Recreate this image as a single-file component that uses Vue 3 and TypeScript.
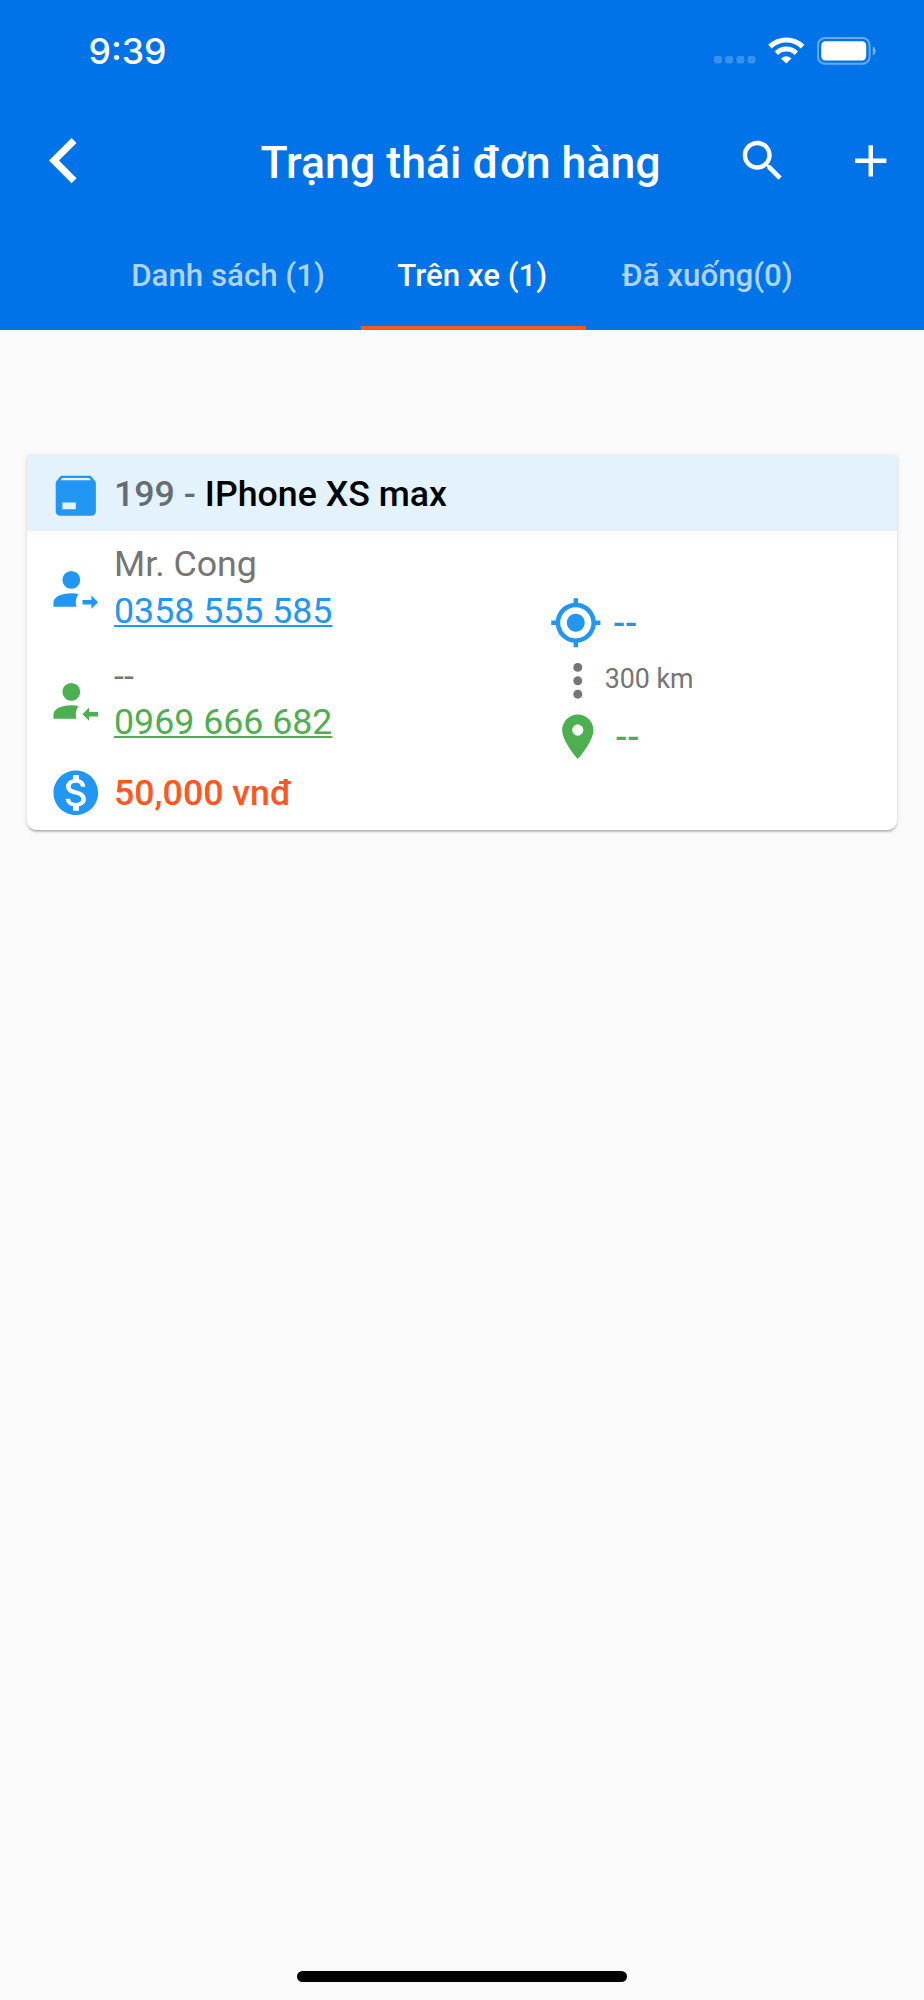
<script setup lang="ts">
interface Tab {
  label: string
  active: boolean
}

interface Contact {
  kind: 'sender' | 'receiver'
  name: string
  phone: string
  arrow: string
}

const tabs: Tab[] = [
  { label: 'Danh sách (1)', active: false },
  { label: 'Trên xe (1)', active: true },
  { label: 'Đã xuống(0)', active: false },
]

const contacts: Contact[] = [
  { kind: 'sender', name: 'Mr. Cong', phone: '0358 555 585', arrow: 'M19 21V19H15V17H19V15L22 18L19 21Z' },
  { kind: 'receiver', name: '--', phone: '0969 666 682', arrow: 'M18 15V17H22V19H18V21L15 18L18 15Z' },
]
</script>

<template>
  <div class="screen">
    <header class="top">
      <div class="status">
        <span class="time">9:39</span>
        <div class="indicators">
          <svg class="signal" viewBox="0 0 42 8" fill="#fff" fill-opacity=".22">
            <rect x="0" y="0" width="8" height="7.4" rx="2.4" />
            <rect x="11.2" y="0" width="8" height="7.4" rx="2.4" />
            <rect x="22.4" y="0" width="8" height="7.4" rx="2.4" />
            <rect x="33.6" y="0" width="8" height="7.4" rx="2.4" />
          </svg>
          <svg class="wifi" viewBox="0 0 37 27" fill="none" stroke="#fff">
            <path d="M2 9.600Q9 3 18.300 3T34.600 9.600" stroke-width="5.200" />
            <path d="M8.300 16.200Q12.500 12.100 18.300 12.100T28.300 16.200" stroke-width="5" />
            <path d="M13 21.400Q18.300 17 23.500 21.400L18.300 26.500Z" fill="#fff" stroke="none" />
          </svg>
          <svg class="battery" viewBox="0 0 60 28">
            <rect x="1" y="1" width="51.600" height="25.800" rx="7" fill="none" stroke="#fff" stroke-opacity=".4" stroke-width="2" />
            <rect x="4.200" y="4.200" width="45" height="19.300" rx="4.200" fill="#fff" />
            <path d="M55.800 9.500C59.600 11 59.600 16.800 55.800 18.400Z" fill="#fff" fill-opacity=".45" />
          </svg>
        </div>
      </div>

      <div class="appbar">
        <svg class="back" viewBox="0 0 29 46" fill="#fff">
          <path d="M22.600 0L27.600 5L10 22.600L27.600 40.200L22.600 45.200L0 22.600Z" />
        </svg>
        <h1 class="title">Trạng thái đơn hàng</h1>
        <div class="actions">
          <svg class="icon" viewBox="0 0 24 24" fill="#fff">
            <path d="M15.500 14h-.79l-.28-.27C15.410 12.590 16 11.110 16 9.500 16 5.910 13.090 3 9.500 3S3 5.910 3 9.500 5.910 16 9.500 16c1.610 0 3.090-.59 4.230-1.570l.27.28v.79l5 4.990L20.490 19l-4.990-5zm-6 0C7.010 14 5 11.990 5 9.500S7.010 5 9.500 5 14 7.010 14 9.500 11.990 14 9.500 14z" />
          </svg>
          <svg class="icon" viewBox="0 0 24 24" fill="#fff">
            <path d="M19 13h-6v6h-2v-6H5v-2h6V5h2v6h6v2z" />
          </svg>
        </div>
      </div>

      <nav class="tabs">
        <div v-for="tab in tabs" :key="tab.label" class="tab" :class="{ active: tab.active }">{{ tab.label }}</div>
      </nav>
    </header>

    <main class="content">
      <article class="card">
        <div class="card-head">
          <svg class="icon blue" viewBox="0 0 24 24" fill="currentColor">
            <path d="M5.120,5H18.870L17.930,4H5.930L5.120,5M20.540,5.230C20.830,5.570 21,6 21,6.500V19A2,2 0 0,1 19,21H5A2,2 0 0,1 3,19V6.500C3,6 3.170,5.570 3.460,5.230L4.840,3.550C5.120,3.210 5.530,3 6,3H18C18.470,3 18.880,3.210 19.150,3.550L20.540,5.230M6,18H12V15H6V18Z" />
          </svg>
          <div class="order"><span class="number">199 - </span>IPhone XS max</div>
        </div>

        <div class="card-body">
          <div class="people">
            <div v-for="c in contacts" :key="c.kind" class="contact" :class="c.kind">
              <svg class="icon" viewBox="0 0 24 24" fill="currentColor">
                <path :d="c.arrow" />
                <path d="M10 4A4 4 0 0 1 14 8A4 4 0 0 1 10 12A4 4 0 0 1 6 8A4 4 0 0 1 10 4M10 14C11.150 14 12.250 14.120 13.240 14.340C12.460 15.350 12 16.620 12 18C12 18.700 12.120 19.370 12.340 20H2V18C2 15.790 5.580 14 10 14Z" />
              </svg>
              <div>
                <div class="name">{{ c.name }}</div>
                <div class="phone">{{ c.phone }}</div>
              </div>
            </div>
            <div class="price">
              <svg class="icon blue" viewBox="0 0 24 24" fill="currentColor">
                <path d="M12 2C6.480 2 2 6.480 2 12s4.480 10 10 10 10-4.480 10-10S17.520 2 12 2zm1.410 16.090V20h-2.670v-1.930c-1.710-.36-3.160-1.460-3.270-3.400h1.960c.1 1.050.82 1.870 2.650 1.870 1.960 0 2.400-.98 2.400-1.590 0-.83-.44-1.610-2.670-2.140-2.480-.6-4.180-1.620-4.180-3.670 0-1.720 1.390-2.840 3.110-3.210V4h2.670v1.950c1.860.45 2.790 1.860 2.850 3.390H14.300c-.05-1.110-.64-1.870-2.220-1.870-1.500 0-2.400.68-2.400 1.640 0 .84.65 1.390 2.670 1.910s4.180 1.390 4.180 3.910c-.01 1.830-1.380 2.830-3.120 3.160z" />
              </svg>
              <span>50,000 vnđ</span>
            </div>
          </div>

          <div class="route">
            <div class="stop blue">
              <svg class="icon" viewBox="0 0 24 24" fill="currentColor">
                <path d="M12 8c-2.210 0-4 1.790-4 4s1.790 4 4 4 4-1.790 4-4-1.790-4-4-4zm8.940 3c-.46-4.170-3.770-7.480-7.940-7.940V1h-2v2.060C6.830 3.520 3.520 6.830 3.060 11H1v2h2.060c.46 4.170 3.770 7.480 7.940 7.940V23h2v-2.060c4.170-.46 7.480-3.770 7.940-7.940H23v-2h-2.060zM12 19c-3.870 0-7-3.130-7-7s3.130-7 7-7 7 3.130 7 7-3.130 7-7 7z" />
              </svg>
              <span>--</span>
            </div>
            <div class="distance">
              <svg class="icon" viewBox="0 0 24 24" fill="currentColor">
                <circle cx="12" cy="6" r="2" />
                <circle cx="12" cy="12" r="2" />
                <circle cx="12" cy="18" r="2" />
              </svg>
              <span>300 km</span>
            </div>
            <div class="stop end">
              <svg class="icon" viewBox="0 0 24 24" fill="currentColor">
                <path d="M12 2C8.130 2 5 5.130 5 9c0 5.250 7 13 7 13s7-7.750 7-13c0-3.870-3.130-7-7-7zm0 9.500c-1.380 0-2.500-1.120-2.500-2.500s1.120-2.500 2.500-2.500 2.500 1.120 2.500 2.500-1.120 2.500-2.500 2.500z" />
              </svg>
              <span>--</span>
            </div>
          </div>
        </div>
      </article>
    </main>

    <div class="home-indicator"></div>
  </div>
</template>

<style>
body {
  background: #fafafa;
}
</style>

<style scoped>
.screen {
  box-sizing: border-box;
  width: 924px;
  height: 2000px;
  display: flex;
  flex-direction: column;
  background: #fafafa;
  font-family: Roboto, "Noto Sans", sans-serif;
  padding-bottom: 18px;
}
svg {
  display: block;
  flex: none;
}
.icon {
  width: 53.57px;
  height: 53.57px;
}
.top {
  height: 330.3px;
  background: #0073e8;
  color: #fff;
}
.status {
  box-sizing: border-box;
  height: 98.2px;
  display: flex;
  justify-content: space-between;
  padding: 0 47.200px 0 88.500px;
}
.time {
  font: 550 35.600px/42px Inter, sans-serif;
  margin-top: 31px;
}
.indicators {
  display: flex;
  align-items: flex-start;
  padding-top: 36.500px;
}
.signal {
  width: 42px;
  height: 8px;
  margin: 19.400px 12px 0 0;
}
.wifi {
  width: 37px;
  height: 27px;
  margin-right: 12px;
}
.battery {
  width: 60px;
  height: 28px;
}
.appbar {
  box-sizing: border-box;
  height: 125px;
  display: grid;
  grid-template-columns: 180px 1fr 180px;
  align-items: center;
  padding: 0 26.800px 0 48.800px;
}
.back {
  width: 29px;
  height: 46px;
}
.title {
  margin: 4px 25px 0 0;
  font-size: 44.640px;
  font-weight: 500;
  line-height: 54px;
  white-space: nowrap;
  justify-self: center;
}
.actions {
  display: flex;
  justify-content: flex-end;
  gap: 53.900px;
}
.tabs {
  height: 107.100px;
  display: flex;
  justify-content: center;
}
.tab {
  box-sizing: border-box;
  height: 107.100px;
  padding: 0 38.400px 0 36.200px;
  font-size: 31.250px;
  font-weight: 500;
  line-height: 106px;
  border-bottom: 4.460px solid transparent;
  color: rgba(255, 255, 255, 0.7);
  white-space: nowrap;
}
.tab:first-child {
  padding: 0 36.200px 0 38.400px;
}
.tab.active {
  color: #fff;
  border-bottom-color: #ff5722;
}
.content {
  flex: 1;
  padding: 124.900px 27px 0;
}
.card {
  height: 375px;
  border-radius: 1px 1px 9px 9px;
  background: #fff;
  box-shadow: 0 3px 2px -2px rgba(0, 0, 0, 0.16), 0 2px 2px rgba(0, 0, 0, 0.13), 0 1px 5px rgba(0, 0, 0, 0.11);
}
.card-head {
  box-sizing: border-box;
  height: 76px;
  padding: 5px 22.300px 0;
  display: flex;
  align-items: center;
  gap: 11.160px;
  background: #e3f2fd;
}
.order {
  font-size: 35.710px;
  font-weight: 500;
  line-height: 46.700px;
  margin-top: -3px;
  color: #000;
}
.number {
  color: #666d72;
}
.card-body {
  display: flex;
  padding: 10px 22.300px 0;
  font-size: 35.710px;
  line-height: 46.700px;
}
.people {
  width: 499.700px;
}
.contact {
  display: flex;
  align-items: center;
  gap: 11.160px;
  margin-bottom: 18px;
}
.contact .icon {
  margin-top: 2px;
}
.name {
  color: #757575;
}
.phone {
  text-decoration: underline;
  text-decoration-thickness: 2.300px;
  text-underline-offset: 2px;
  text-decoration-skip-ink: none;
}
.sender,
.blue {
  color: #2196f3;
}
.receiver,
.end {
  color: #4caf50;
}
.price {
  display: flex;
  align-items: center;
  gap: 11.160px;
  margin-top: 2.400px;
  height: 53.570px;
  margin-top: 2.400px;
  font-weight: 500;
  color: #ff5722;
  margin-top: -16px;
  padding-top: 18.400px;
}
.price span {
  padding-top: 1px;
}
.route {
  padding-top: 54.700px;
}
.stop,
.distance {
  display: flex;
  align-items: center;
  height: 53.570px;
  font-weight: 500;
}
.stop span {
  margin: 2px 0 0 10.400px;
}
.distance {
  margin: 4.400px 0 2.200px 0;
  font-size: 26.780px;
  font-weight: 400;
  color: #757575;
}
.distance span {
  margin-top: -2px;
}
.distance .icon,
.end .icon {
  margin-left: 2.230px;
}
.home-indicator {
  width: 330px;
  height: 11px;
  border-radius: 6px;
  background: #000;
  margin: 0 auto;
}
</style>
